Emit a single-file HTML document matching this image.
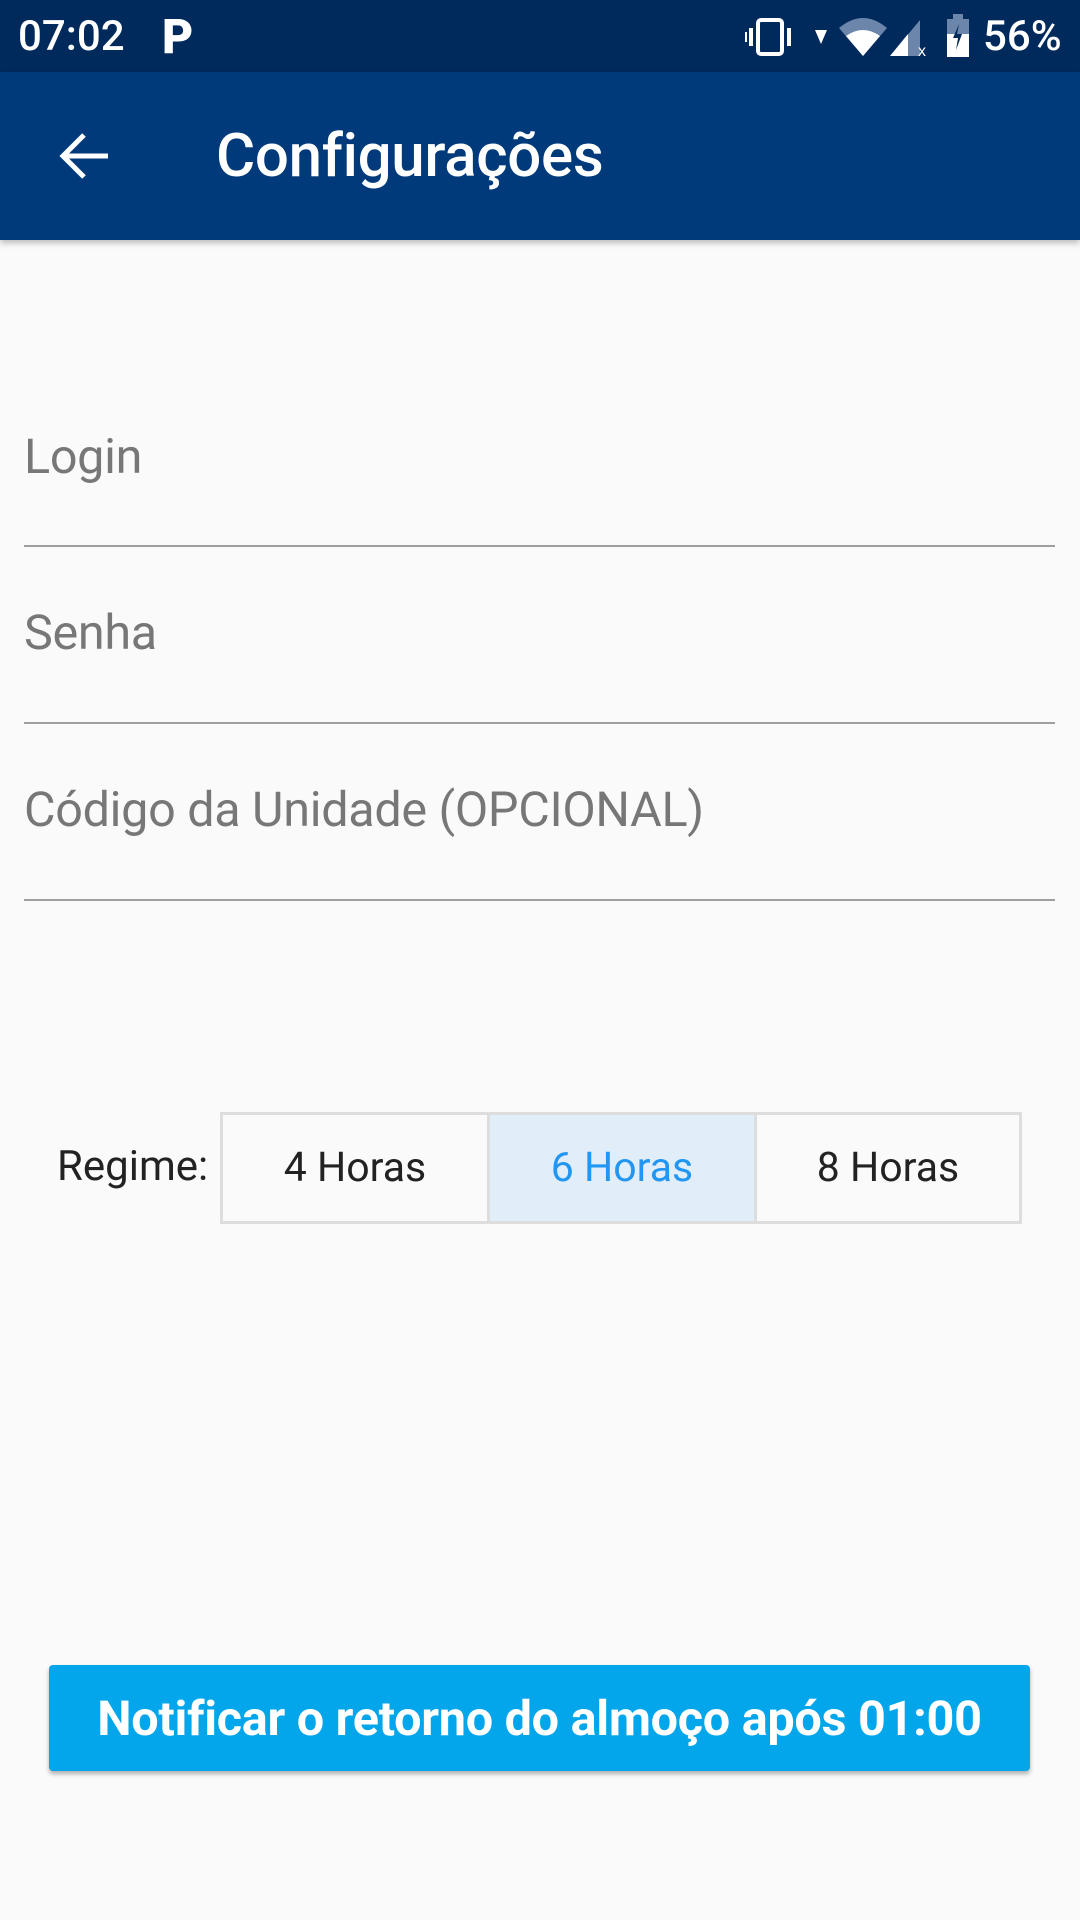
<!DOCTYPE html>
<html><head><meta charset="utf-8"><style>
*{margin:0;padding:0;box-sizing:border-box}
body{width:1080px;height:1920px;background:#fafafa;font-family:"Roboto","Liberation Sans",sans-serif;position:relative;overflow:hidden}
.sb{position:absolute;left:0;top:0;width:1080px;height:72px;background:#002a5c;color:#fff}
.ab{position:absolute;left:0;top:72px;width:1080px;height:168px;background:#003a7a;box-shadow:0 3px 6px rgba(0,0,0,.25)}
.t{position:absolute;white-space:nowrap}
.lbl{position:absolute;left:24px;font-size:48.5px;color:#777;letter-spacing:-0.3px}
.ln{position:absolute;left:24px;width:1031px;height:2px;background:#9e9e9e}
.seg{position:absolute;top:1112px;height:112px;border:3px solid #ddd;display:flex;align-items:center;justify-content:center;font-size:41px;color:#222}
.btn{position:absolute;left:49px;top:1665px;width:981px;height:106px;background:#03a6ea;border-radius:4px;box-shadow:0 3px 5px rgba(0,0,0,.3);color:#fff;font-weight:bold;font-size:48.6px;display:flex;align-items:center;justify-content:center;letter-spacing:-0.3px}
</style></head><body>
<div class="sb">
<div class="t" style="left:18px;top:12px;font-size:42px;font-weight:500">07:02</div>
<div class="t" style="left:162px;top:8px;font-size:48px;font-weight:900;">P</div>
<svg style="position:absolute;left:745px;top:18px" width="50" height="38"><rect x="13" y="2" width="24" height="34" rx="3" fill="none" stroke="#fff" stroke-width="4"/><rect x="4" y="10" width="4" height="18" fill="#fff"/><rect x="42" y="10" width="4" height="18" fill="#fff"/><rect x="0" y="14" width="2" height="10" fill="#fff"/></svg>
<svg style="position:absolute;left:815px;top:30px" width="14" height="16"><path d="M0 0H12L6 14Z" fill="#fff"/></svg>
<svg style="position:absolute;left:838px;top:16px" width="50" height="40"><path d="M1 12Q25 -8 49 12L25 40Z" fill="#6b86aa"/><path d="M8 20Q25 8 42 20L25 40Z" fill="#fff"/></svg>
<svg style="position:absolute;left:890px;top:18px" width="40" height="40"><path d="M0 38L30 2V38Z" fill="#6b86aa"/><path d="M0 38L18 16V38Z" fill="#fff"/><text x="28" y="38" font-size="16" fill="#fff" font-family="Liberation Sans">x</text></svg>
<svg style="position:absolute;left:945px;top:14px" width="26" height="44"><rect x="8" y="0" width="10" height="5" fill="#6b86aa"/><rect x="2" y="5" width="22" height="38" fill="#6b86aa"/><rect x="2" y="20" width="22" height="23" fill="#fff"/><path d="M14 10L8 24H13L11 36L17 20H12Z" fill="#002a5c"/></svg>
<div class="t" style="left:983px;top:12px;font-size:42px;font-weight:500">56%</div>
</div>
<div class="ab">
<svg style="position:absolute;left:58px;top:60px" width="52" height="48"><path d="M50 24H6M26 3L5 24L26 45" fill="none" stroke="#fff" stroke-width="5"/></svg>
<div class="t" style="left:216px;top:48px;font-size:60px;font-weight:500;color:#fff;letter-spacing:-0.3px">Configurações</div>
</div>
<div class="lbl" style="top:428px">Login</div><div class="ln" style="top:545px"></div>
<div class="lbl" style="top:604px">Senha</div><div class="ln" style="top:722px"></div>
<div class="lbl" style="top:781px">Código da Unidade (OPCIONAL)</div><div class="ln" style="top:899px"></div>
<div class="t" style="left:57px;top:1142px;font-size:42px;color:#222">Regime:</div>
<div class="seg" style="left:220px;width:270px">4 Horas</div>
<div class="seg" style="left:487px;width:270px;background:#e1eef9;color:#2196f3">6 Horas</div>
<div class="seg" style="left:754px;width:268px">8 Horas</div>
<div class="btn">Notificar o retorno do almoço após 01:00</div>
</body></html>
